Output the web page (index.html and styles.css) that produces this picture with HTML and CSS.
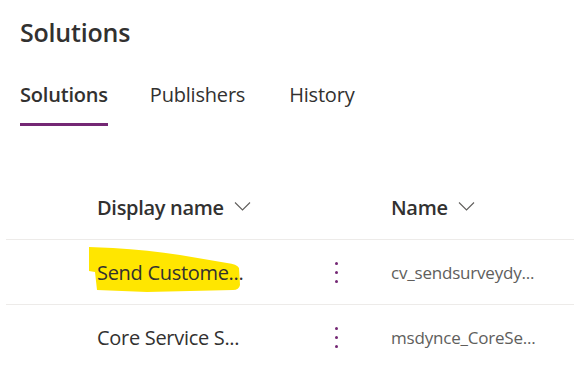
FILE: index.html
```html
<!DOCTYPE html>
<html lang="en">
<head>
  <meta charset="UTF-8">
  <meta name="viewport" content="width=device-width, initial-scale=1.0">
  <title>Solutions</title>
  <link rel="stylesheet" href="styles.css">
</head>
<body>
  <h1 class="title">Solutions</h1>

  <nav class="tabs">
    <a class="tab active">Solutions</a>
    <a class="tab">Publishers</a>
    <a class="tab">History</a>
  </nav>

  <div class="grid">
    <div class="row head">
      <div class="cell">Display name
        <svg class="chev" width="17" height="10" viewBox="0 0 17 10"><path d="M1 1.5 L8.5 9 L16 1.5" fill="none" stroke="#605e5c" stroke-width="1.1"/></svg>
      </div>
      <div class="cell"></div>
      <div class="cell name">Name
        <svg class="chev" width="17" height="10" viewBox="0 0 17 10"><path d="M1 1.5 L8.5 9 L16 1.5" fill="none" stroke="#605e5c" stroke-width="1.1"/></svg>
      </div>
    </div>

    <div class="row">
      <div class="cell display marked">
        <svg class="marker" width="154" height="48" viewBox="0 0 154 48"><path d="M1 1 L25 2 Q60 4 92 9 L139 17 Q149 18 151 22 L152 39 Q151 44 145 44 L59 46 L9 44 L7 26 L1 25 Z" fill="#ffe600"/></svg>
        <span class="label">Send Custome...</span>
      </div>
      <div class="cell more"><span class="dots"><i></i><i></i><i></i></span></div>
      <div class="cell name small">cv_sendsurveydy...</div>
    </div>

    <div class="row">
      <div class="cell display"><span class="label">Core Service S...</span></div>
      <div class="cell more"><span class="dots"><i></i><i></i><i></i></span></div>
      <div class="cell name small">msdynce_CoreSe...</div>
    </div>
  </div>
</body>
</html>
```

FILE: styles.css
```css
body { margin: 0; background: #fff; color: #323130; font-family: "Open Sans", "Noto Sans", sans-serif; }
.title { margin: 0; padding: 14px 0 0 20px; font-size: 25px; font-weight: 600; line-height: 36px; letter-spacing: -0.2px; }
.tabs { display: flex; padding-left: 20px; margin-top: 31px; }
.tab { font-size: 20px; line-height: 28px; padding-bottom: 14px; margin-right: 44px; border-bottom: 3px solid transparent; letter-spacing: -0.2px; }
.tab.active { font-weight: 600; border-bottom-color: #742774; margin-right: 42px; }
.grid { margin: 54px 0 0 6px; }
.row { display: grid; grid-template-columns: 223px 32px 1fr; padding-left: 91px; height: 64px; align-items: center; border-bottom: 1px solid #edebe9; }
.row.head { height: 59px; font-weight: 600; font-size: 20px; }
.row.head .cell { display: flex; align-items: center; gap: 10px; letter-spacing: -0.3px; padding-bottom: 4px; }
.chev { margin-top: -4px; }
.cell.name { padding-left: 39px; }
.display { position: relative; font-size: 20px; letter-spacing: -0.3px; height: 100%; display: flex; align-items: center; }
.marker { position: absolute; left: -9px; top: 6px; }
.label { position: relative; }
.small { font-size: 17px; color: #605e5c; letter-spacing: -0.2px; }
.more { display: flex; justify-content: center; }
.dots { display: flex; flex-direction: column; gap: 6px; }
.dots i { width: 3px; height: 3px; border-radius: 50%; background: #742774; }
```
